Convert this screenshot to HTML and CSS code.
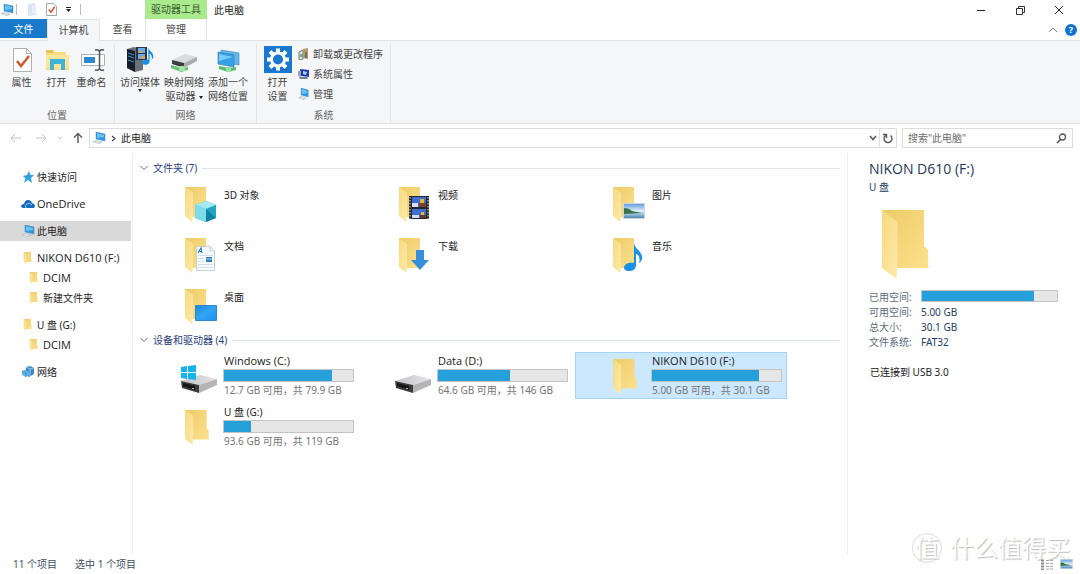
FILE: index.html
```html
<!DOCTYPE html>
<html lang="zh-CN">
<head>
<meta charset="utf-8">
<title>此电脑</title>
<link rel="stylesheet" href="styles.css">
</head>
<body>
<svg class="defs" width="0" height="0" aria-hidden="true">
  <defs>
    <linearGradient id="g-flap" x1="0" y1="0" x2="1" y2="1"><stop offset="0" stop-color="#f8da7c"/><stop offset="1" stop-color="#fdeaaa"/></linearGradient>
    <linearGradient id="g-back" x1="0" y1="0" x2="1" y2="1"><stop offset="0" stop-color="#edcb68"/><stop offset="1" stop-color="#fce08c"/></linearGradient>
    <linearGradient id="g-screen" x1="0" y1="0" x2="1" y2="1"><stop offset="0" stop-color="#1c86e0"/><stop offset=".5" stop-color="#35a4f6"/><stop offset="1" stop-color="#1b8ff0"/></linearGradient>
    <linearGradient id="g-disk" x1="0" y1="0" x2="1" y2="0"><stop offset="0" stop-color="#c4c4c6"/><stop offset="1" stop-color="#e4e4e6"/></linearGradient>
    <linearGradient id="g-sky" x1="0" y1="0" x2="0" y2="1"><stop offset="0" stop-color="#5f9fe0"/><stop offset=".5" stop-color="#e4f0fa"/><stop offset="1" stop-color="#4d86b8"/></linearGradient>
  </defs>
  <symbol id="folder" viewBox="0 0 50 69">
    <path d="M0 0H42V36L46 40V58H14L0 50Z" fill="url(#g-back)"/>
    <path d="M0 0 15.500 12V49L14.500 69 0 58Z" fill="url(#g-flap)"/>
    <path d="M46 57l3-1-3 2z" fill="#d8d3c8"/>
  </symbol>
  <symbol id="folder-item" viewBox="0 0 36 44">
    <path d="M4 2H25V32H12L4 28Z" fill="url(#g-back)"/>
    <path d="M4 2 12 8V32L11 37 4 31Z" fill="url(#g-flap)"/>
  </symbol>
  <symbol id="pc" viewBox="0 0 14 12">
    <path d="M4 0 13 2V9L4 7Z" fill="#2e9be3"/><path d="M5 1 12 3V5L5 6Z" fill="#68c2f5"/>
    <path d="M4 0 13 2V9L4 7Z" fill="none" stroke="#3c7299" stroke-width=".4"/>
    <path d="M0 10 4 8 11 10 7 12Z" fill="#b7c6cf"/><path d="M2 10 5 9 9 10 6 11Z" fill="#dfe8ee"/>
  </symbol>
  <symbol id="disk" viewBox="0 0 36 18">
    <path d="M0 6 19 0 36 4 18 10Z" fill="url(#g-disk)"/>
    <path d="M0 6 18 10V18L1 13Z" fill="#3b3b3d"/><path d="M18 10 36 4V10L18 18Z" fill="#b4b4b7"/>
    <path d="M2 8 14 11V15L2 11Z" fill="#171718"/><path d="M11 13h2v1h-2z" fill="#9bcf8f"/>
  </symbol>
  <symbol id="photo" viewBox="0 0 22 16">
    <path d="M0 0H22V16H0Z" fill="#fff"/><path d="M0.500.5H21.500V15.500H.5Z" fill="none" stroke="#ccd6df"/>
    <path d="M1 1H21V15H1Z" fill="url(#g-sky)"/><path d="M1 5Q6 5 9 8L19 10 1 11Z" fill="#37764c"/>
  </symbol>
  <symbol id="note" viewBox="0 0 19 28">
    <path d="M10 0C11 7 19 8 18 16Q17 19 15 20C17 13 13 11 12 11V22C12 27 8 28 5 28 1 28 0 26 0 24 1 20 6 19 10 20Z" fill="#1891e6"/>
  </symbol>
</svg>

<div class="window">
  <header class="titlebar">
    <div class="quick">
      <svg class="i14" viewBox="0 0 14 12"><use href="#pc"/></svg>
      <span class="bar"></span>
      <button aria-label="新建文件夹"><svg width="9" height="13" viewBox="0 0 9 13"><path d="M0 1 7 0V11H9V12L0 13Z" fill="#d9e5f3"/><path d="M4 2h4v9H4z" fill="#e8eef7"/></svg></button>
      <button aria-label="属性"><svg width="11" height="13" viewBox="0 0 24 28"><path d="M1 1H17L23 7V27H1Z" fill="#fff" stroke="#9b9b9b" stroke-width="2"/><path d="M6 14 11 20 19 8" fill="none" stroke="#d35a32" stroke-width="3.500"/></svg></button>
      <button aria-label="自定义"><svg width="5" height="5" viewBox="0 0 5 5"><path d="M0 0H5V1H0ZM0 2H5L2.500 5Z" fill="#222"/></svg></button>
      <span class="bar"></span>
    </div>
    <div class="context">驱动器工具</div>
    <h1 class="title">此电脑</h1>
    <div class="controls">
      <button aria-label="最小化"><svg width="10" height="10" viewBox="0 0 10 10"><path d="M1 5.500H9" stroke="#222"/></svg></button>
      <button aria-label="还原"><svg width="10" height="10" viewBox="0 0 10 10"><path d="M1.500 3.500H7.500V9.500H1.500ZM3.500 3.500V1.500H9.500V7.500H7.500" fill="none" stroke="#333"/></svg></button>
      <button aria-label="关闭"><svg width="10" height="10" viewBox="0 0 10 10"><path d="M1 1 9 9M9 1 1 9" stroke="#222"/></svg></button>
    </div>
  </header>

  <nav class="tabs">
    <button class="tab file">文件</button>
    <button class="tab active">计算机</button>
    <button class="tab view">查看</button>
    <button class="tab manage">管理</button>
    <div class="help">
      <button aria-label="折叠功能区"><svg width="10" height="6" viewBox="0 0 10 6"><path d="M1 5 5 1 9 5" fill="none" stroke="#7b8591"/></svg></button>
      <button class="q" aria-label="帮助">?</button>
    </div>
  </nav>

  <section class="ribbon">
    <div class="group place">
      <div class="tools">
        <button class="tool"><svg viewBox="0 0 28 28"><path d="M5.500 2.500H18.500L23.500 7.500V25.500H5.500Z" fill="#fdfdfd" stroke="#b0b0b0"/><path d="M18.500 2.500V7.500H23.500" fill="none" stroke="#b0b0b0"/><path d="M9 15 13 20 21 10" fill="none" stroke="#d2562f" stroke-width="2.500"/></svg>属性</button>
        <button class="tool"><svg viewBox="0 0 28 28"><path d="M3 4H10L12 6H23V9H26V24H3Z" fill="#f7dc85"/><path d="M3 4H10V7H3Z" fill="#e9c350"/><path d="M3 9H26V22H3Z" fill="#fbe59b"/><path d="M7 24V13H22V24H18V18H11V24Z" fill="#3fb4d8"/></svg>打开</button>
        <button class="tool"><svg viewBox="0 0 28 28"><path d="M3.500 8.500H26.500V19.500H3.500Z" fill="#fff" stroke="#a8b0b8"/><path d="M6 11H17V17H6Z" fill="#2f86d2"/><path d="M17 4Q21 3 21.500 6 22 3 26 4M21.500 6V22M17 24Q21 25 21.500 22 22 25 26 24" fill="none" stroke="#555" stroke-width="1.500"/></svg>重命名</button>
      </div>
      <h2>位置</h2>
    </div>
    <div class="group net">
      <div class="tools">
        <button class="tool wide"><svg viewBox="0 0 28 28"><path d="M1 3 8 1 17 3V24L9 26 1 22Z" fill="#6b7178"/><path d="M1 3 9 5V26L1 22Z" fill="#17202a"/><path d="M2 7 8 9M2 10 8 12M2 14 8 16" stroke="#3d91cf"/><path d="M10 1H21V14H10Z" fill="#273352"/><path d="M12 2H19V7H12ZM12 8H19V13H12Z" fill="#6caae8"/><path d="M12 5H16V7H12ZM15 10H19V13H15Z" fill="#d8a54e"/><use href="#note" x="16" y="1" width="12" height="18"/></svg>访问媒体<i class="caret low"></i></button>
        <button class="tool wide"><svg viewBox="0 0 28 28"><path d="M2 14 15 8 27 11 14 17Z" fill="#dadbdd"/><path d="M2 14 14 17V22L2 18Z" fill="#3d3e40"/><path d="M14 17 27 11V15L14 22Z" fill="#a9abad"/><path d="M1 19 12 22 18 21V24L11 26 1 22Z" fill="#65c673"/><path d="M9 20H15V25H9Z" fill="#a5dfaa"/></svg>映射网络<span>驱动器<i class="caret"></i></span></button>
        <button class="tool wide"><svg viewBox="0 0 28 28"><path d="M7 4 25 7V19L7 16Z" fill="#62b8ea" stroke="#3e80ac" stroke-width=".6"/><path d="M4 6 20 9V21L4 18Z" fill="#35a1e6" stroke="#3272a0" stroke-width=".6"/><path d="M5 8 19 11 5 15Z" fill="#79ccf7"/><path d="M5 20 15 22 22 21V24L14 26 5 23Z" fill="#54bd70"/><path d="M12 21H17V26H12Z" fill="#9ddca5"/></svg>添加一个<span>网络位置</span></button>
      </div>
      <h2>网络</h2>
    </div>
    <div class="group sys">
      <div class="tools">
        <button class="tool"><svg viewBox="0 0 28 28"><path d="M0 0H28V27H0Z" fill="#1878cf"/><g transform="translate(14 13.500)"><g stroke="#fff" stroke-width="4"><path d="M0-11V11M-11 0H11M-8-8 8 8M8-8-8 8"/></g><circle r="8" fill="#fff"/><circle r="5" fill="#1878cf"/></g></svg>打开<span>设置</span></button>
        <div class="small">
          <button><svg width="11" height="12" viewBox="0 0 11 12"><path d="M1 4 5 2V11L1 12Z" fill="#e4e7e5" stroke="#6d7772"/><path d="M5 1 10 0V11L5 10Z" fill="#b99b6b"/><path d="M7 4H9V10H7Z" fill="#6a6f68"/><path d="M2 6H5V9H2Z" fill="#79a38d"/></svg>卸载或更改程序</button>
          <button><svg width="11" height="12" viewBox="0 0 11 12"><path d="M2 1 11 2V9L3 8Z" fill="#1d3da6"/><path d="M5 3 9 4 8 7 5 6Z" fill="#a6c8f3"/><path d="M0 3 3 3V9L0 8Z" fill="#9da3af"/><path d="M1 9 9 9 10 11 2 11Z" fill="#777f8c"/></svg>系统属性</button>
          <button><svg width="11" height="12" viewBox="0 0 14 12" preserveAspectRatio="none"><use href="#pc"/></svg>管理</button>
        </div>
      </div>
      <h2>系统</h2>
    </div>
  </section>

  <div class="address">
    <div class="arrows">
      <button aria-label="后退"><svg width="12" height="10" viewBox="0 0 12 10"><path d="M11 5H1M5 1 1 5 5 9" fill="none" stroke="#c4c4c4"/></svg></button>
      <button aria-label="前进"><svg width="12" height="10" viewBox="0 0 12 10"><path d="M1 5H11M7 1 11 5 7 9" fill="none" stroke="#c4c4c4"/></svg></button>
      <button aria-label="最近位置"><svg width="6" height="10" viewBox="0 0 6 10"><path d="M1 4 3 6 5 4" fill="none" stroke="#c4c4c4"/></svg></button>
      <button aria-label="上移"><svg width="10" height="12" viewBox="0 0 10 12"><path d="M5 11V1M1 5.500 5 1.500 9 5.500" fill="none" stroke="#5f5f5f" stroke-width="1.500"/></svg></button>
    </div>
    <div class="path">
      <svg class="i14" viewBox="0 0 14 12"><use href="#pc"/></svg>
      <svg width="5" height="7" viewBox="0 0 5 7"><path d="M1 1 4 3.500 1 6" fill="none" stroke="#444" stroke-width="1.200"/></svg>
      <span class="here">此电脑</span>
      <button class="down" aria-label="历史"><svg width="8" height="6" viewBox="0 0 8 6"><path d="M1 1 4 4.500 7 1" fill="none" stroke="#555" stroke-width="1.500"/></svg></button>
      <button class="refresh" aria-label="刷新"><svg width="10" height="11" viewBox="0 0 10 11"><path d="M7.500 2.500A4 4 0 1 1 2.500 2.500M0 1.500H3.500V5" fill="none" stroke="#555" stroke-width="1.400"/></svg></button>
    </div>
    <label class="search">
      <input type="search" aria-label="搜索" placeholder="搜索&quot;此电脑&quot;">
      <svg width="11" height="11" viewBox="0 0 11 11"><circle cx="6.500" cy="4" r="3" fill="none" stroke="#555" stroke-width="1.300"/><path d="M4.500 6.500 1 10" stroke="#555" stroke-width="1.600"/></svg>
    </label>
  </div>

  <div class="body">
    <nav class="tree">
      <a href="#"><svg class="i14" viewBox="0 0 14 12"><path d="M8 0 9.500 4H13L10 7 11 12 7 9 3 12 4.500 7.500 2 5 6 4Z" fill="#329fe0"/></svg>快速访问</a>
      <a href="#" class="latin top"><svg class="i14" viewBox="0 0 14 12"><path d="M0 9Q0 6 3 6 4 2 7 2 10 2 11 5 14 6 14 8 14 10 12 10H2Z" fill="#1469c0"/><path d="M5 10Q3 7 6 6 8 4 11 7" fill="none" stroke="#cfe4f7" stroke-width=".8"/></svg>OneDrive</a>
      <a href="#" class="top on"><svg class="i14" viewBox="0 0 14 12"><use href="#pc"/></svg>此电脑</a>
      <a href="#" class="latin top"><svg class="i14" viewBox="0 0 50 69"><use href="#folder"/></svg>NIKON D610 (F:)</a>
      <a href="#" class="latin sub"><svg class="i14" viewBox="0 0 50 69"><use href="#folder"/></svg>DCIM</a>
      <a href="#" class="sub"><svg class="i14" viewBox="0 0 50 69"><use href="#folder"/></svg>新建文件夹</a>
      <a href="#" class="top"><svg class="i14" viewBox="0 0 50 69"><use href="#folder"/></svg>U 盘 (G:)</a>
      <a href="#" class="latin sub"><svg class="i14" viewBox="0 0 50 69"><use href="#folder"/></svg>DCIM</a>
      <a href="#" class="top"><svg class="i14" viewBox="0 0 14 12"><path d="M5 1 9 0 13 2V8L8 11 4 8Z" fill="#3c8ac8"/><path d="M5 1 9 3 13 2M9 3V10" stroke="#93cbee" fill="none"/><path d="M1 5 4 4 8 6V9L5 11 1 9Z" fill="#5fb5ea"/><path d="M1 5 5 7V11" fill="none" stroke="#286ba5" stroke-width=".6"/></svg>网络</a>
    </nav>

    <main class="content">
      <h2 class="section"><svg width="8" height="6" viewBox="0 0 8 6"><path d="M0.500 1 4 4.500 7.500 1" fill="none" stroke="#66707e"/></svg>文件夹 (7)</h2>
      <div class="grid folders">
        <button class="item"><svg class="pic" viewBox="0 0 36 44"><use href="#folder-item"/><path d="M14 20 25 16 35 20V33L25 37 14 33Z" fill="#35bfd6"/><path d="M14 20 25 16 35 20 25 24Z" fill="#a4eaf2"/><path d="M14 20 25 24V37L14 33Z" fill="#7cdce9"/><path d="M25 24 35 20V33Z" fill="#24a4c3"/><path d="M25 24 35 33 25 37Z" fill="#1181a6"/></svg><span class="info"><span class="name">3D 对象</span></span></button>
        <button class="item"><svg class="pic" viewBox="0 0 36 44"><use href="#folder-item"/><path d="M14 11H34V34H14Z" fill="#25262c"/><path d="M15 12V34M33 12V34" stroke="#e8e8e8" stroke-dasharray="1.500 1.500"/><path d="M17 12H31V22H17ZM17 24H31V33H17Z" fill="#3d6fd3"/><path d="M17 18H23V22H17ZM17 30H24V33H17Z" fill="#d7dfee"/><path d="M25 14H29V18H25ZM26 27H29V31H26Z" fill="#e5b92e"/><path d="M24 18H31V22H24Z" fill="#7c4033"/><path d="M25 30H31V33H25Z" fill="#65382d"/></svg><span class="info"><span class="name">视频</span></span></button>
        <button class="item"><svg class="pic" viewBox="0 0 36 44"><use href="#folder-item"/><use href="#photo" x="14" y="18" width="22" height="16"/></svg><span class="info"><span class="name">图片</span></span></button>
        <button class="item"><svg class="pic" viewBox="0 0 36 44"><use href="#folder-item"/><path d="M15.500 10.500H29L33.500 15V34.500H15.500Z" fill="#f7fafc" stroke="#c8d0d6"/><path d="M29 10.500V15H33.500" fill="none" stroke="#c8d0d6"/><path d="M17 17 20 12 21 17M18 15.500H21" fill="none" stroke="#2a86b8" stroke-width="1.200"/><path d="M17 19.500H32M17 22.500H23M17 25.500H23M17 28.500H32M17 31.500H32" stroke="#cfe0ec"/><path d="M25 21H31V26H25Z" fill="#2d7db6"/><path d="M25 23H31" stroke="#b8dbef"/></svg><span class="info"><span class="name">文档</span></span></button>
        <button class="item"><svg class="pic" viewBox="0 0 36 44"><use href="#folder-item"/><path d="M21 14H29V24H34L25 34 16 24H21Z" fill="#358fdb"/></svg><span class="info"><span class="name">下载</span></span></button>
        <button class="item"><svg class="pic" viewBox="0 0 36 44"><use href="#folder-item"/><use href="#note" x="15" y="7" width="19" height="28"/></svg><span class="info"><span class="name">音乐</span></span></button>
        <button class="item"><svg class="pic" viewBox="0 0 36 44"><use href="#folder-item"/><path d="M14.500 18.500H35.500V33.500H14.500Z" fill="url(#g-screen)" stroke="#2f86cc"/></svg><span class="info"><span class="name">桌面</span></span></button>
      </div>

      <h2 class="section"><svg width="8" height="6" viewBox="0 0 8 6"><path d="M0.500 1 4 4.500 7.500 1" fill="none" stroke="#66707e"/></svg>设备和驱动器 (4)</h2>
      <div class="grid drives">
        <button class="item"><svg class="pic" viewBox="0 0 36 44"><use href="#disk" x="0" y="22" width="36" height="18"/><path d="M0 14 6 13V19H0ZM7 13 15 12V19H7ZM0 20H6V26L0 25ZM7 20H15V27L7 26Z" fill="#14b4f0"/></svg><span class="info"><span class="name latin">Windows (C:)</span><span class="meter"><span style="width:84%"></span></span><span class="free">12.7 GB 可用，共 79.9 GB</span></span></button>
        <button class="item"><svg class="pic" viewBox="0 0 36 44"><use href="#disk" x="0" y="22" width="36" height="18"/></svg><span class="info"><span class="name latin">Data (D:)</span><span class="meter"><span style="width:56%"></span></span><span class="free">64.6 GB 可用，共 146 GB</span></span></button>
        <button class="item selected"><svg class="pic" viewBox="0 0 36 44"><use href="#folder" x="4" y="6" width="26" height="35"/></svg><span class="info"><span class="name latin">NIKON D610 (F:)</span><span class="meter"><span style="width:83%"></span></span><span class="free">5.00 GB 可用，共 30.1 GB</span></span></button>
        <button class="item"><svg class="pic" viewBox="0 0 36 44"><use href="#folder" x="4" y="6" width="26" height="35"/></svg><span class="info"><span class="name">U 盘 (G:)</span><span class="meter"><span style="width:21%"></span></span><span class="free">93.6 GB 可用，共 119 GB</span></span></button>
      </div>
    </main>

    <aside class="details">
      <h2>NIKON D610 (F:)</h2>
      <p class="kind">U 盘</p>
      <svg class="big" viewBox="0 0 50 69"><use href="#folder"/></svg>
      <dl>
        <dt>已用空间:</dt><dd><span class="meter"><span style="width:83%"></span></span></dd>
        <dt>可用空间:</dt><dd>5.00 GB</dd>
        <dt>总大小:</dt><dd>30.1 GB</dd>
        <dt>文件系统:</dt><dd>FAT32</dd>
      </dl>
      <p class="usb">已连接到 USB 3.0</p>
    </aside>
  </div>

  <footer class="status">
    <span>11 个项目</span>
    <span>选中 1 个项目</span>
    <div class="views">
      <button aria-label="详细信息"><svg width="12" height="11" viewBox="0 0 12 11"><path d="M0 1.500H3M0 4.500H3M0 7.500H3M0 10.500H3" stroke="#888" stroke-width="2"/><path d="M5 1.500H8M9 1.500H12M5 4.500H8M9 4.500H12M5 7.500H8M9 7.500H12M5 10H8M9 10H12" stroke="#aaa"/></svg></button>
      <button aria-label="大图标"><svg width="13" height="10" viewBox="0 0 22 16" preserveAspectRatio="none"><use href="#photo"/></svg></button>
    </div>
  </footer>

  <div class="watermark"><span class="seal">值</span><span>什么值得买</span></div>
</div>
</body>
</html>
```

FILE: styles.css
```css
* { box-sizing: border-box; }
body { margin: 0; background: #fefefe; }
body, button, input { font-family: "Noto Sans", "Noto Sans CJK SC", sans-serif; font-size: 10px; line-height: 14px; color: #222; }
button { border: 0; padding: 0; margin: 0; background: none; }
h1, h2, p, dl, dd { margin: 0; font-weight: 400; font-size: 10px; }
svg { display: block; flex: none; }
a { color: inherit; text-decoration: none; }
.defs { position: absolute; }
.i14 { width: 14px; height: 12px; }
.latin { font-family: "Open Sans", sans-serif; font-size: 11px; }
.window { position: relative; min-height: 100vh; display: flex; flex-direction: column; }

.titlebar { display: flex; height: 19px; align-items: center; }
.quick { display: flex; align-items: center; width: 145px; gap: 9px; }
.quick .bar { width: 1px; height: 11px; background: #bbb; }
.quick .bar:first-of-type { margin: 0 2px 0 -7px; }
.context { width: 62px; height: 19px; line-height: 18px; text-align: center; background: #a9eb8c; color: #3c5a30; }
.title { padding-left: 7px; }
.controls { display: flex; gap: 29px; margin-left: auto; padding-right: 16px; }

.tabs { display: flex; height: 22px; }
.tab { height: 22px; padding-bottom: 2px; color: #444; }
.tab.file { width: 47px; height: 19px; padding: 0; background: #1979ca; color: #fff; }
.tab.active { position: relative; z-index: 1; width: 53px; background: #f5f6f7; border: 1px solid #e3e4e5; border-bottom: 0; }
.tab.view { width: 45px; }
.tab.manage { width: 62px; border: solid #e3e4e5; border-width: 0 1px; }
.help { display: flex; align-items: center; gap: 7px; margin-left: auto; padding-right: 3px; }
.q { width: 12px; height: 12px; border-radius: 50%; background: #1173cc; color: #fff; font-size: 9px; line-height: 12px; font-weight: 700; }

.ribbon { display: flex; height: 84px; margin-top: -1px; padding-top: 3px; background: #f5f6f7; border: solid #e0e1e3; border-width: 1px 0; }
.group { display: flex; flex-direction: column; border-right: 1px solid #e4e5e7; color: #444; }
.group h2 { margin-top: auto; padding-bottom: 1px; text-align: center; color: #666; }
.tools { display: flex; padding-top: 2px; }
.place { width: 115px; padding: 0 4px; }
.net { width: 142px; padding: 0 3px; }
.sys { width: 134px; padding: 0 3px; }
.tool { width: 35px; display: flex; flex-direction: column; align-items: center; color: #444; white-space: nowrap; }
.tool.wide { width: 44px; }
.tool svg { width: 28px; height: 28px; margin-bottom: 1px; }
.caret { display: inline-block; margin-left: 3px; border: 2px solid transparent; border-top: 3px solid #222; border-bottom: 0; vertical-align: middle; }
.caret.low { margin: 0; }
.small { display: flex; flex-direction: column; gap: 6px; padding: 1px 0 0 3px; }
.small button { display: flex; align-items: center; gap: 4px; color: #444; }

.address { display: flex; height: 29px; padding: 4px 7px 5px 10px; gap: 5px; }
.arrows { display: flex; align-items: center; width: 74px; gap: 13px; }
.arrows button:nth-child(n+3) { margin-left: -3px; }
.path { flex: 1; display: flex; align-items: center; border: 1px solid #dcdcdc; padding-left: 2px; gap: 5px; background: #fff; }
.path .down { margin: 0 -3px 0 auto; }
.refresh { height: 18px; padding: 0 3px; border-left: 1px solid #e2e2e2; }
.search { width: 171px; display: flex; align-items: center; border: 1px solid #dcdcdc; padding: 0 5px; }
.search input { flex: 1; min-width: 0; border: 0; padding: 0; outline: 0; background: none; }
.search input::placeholder { color: #6d6d6d; opacity: 1; }

.body { flex: 1; display: flex; }
.tree { width: 133px; padding-top: 14px; border-right: 1px solid #f1f1f1; }
.tree a { display: flex; align-items: center; height: 20px; gap: 2px; padding-left: 21px; white-space: nowrap; }
.tree a.top { margin-top: 7px; }
.tree a.sub { padding-left: 27px; }
.tree a.on { background: #d9d9d9; margin-right: 1px; }
.content { flex: 1; padding: 5px 7px 0 14px; }
.section { display: flex; align-items: center; height: 20px; gap: 5px; margin-left: -7px; color: #2b3f7c; }
.section::after { content: ""; flex: 1; height: 1px; background: #e2e6ea; }
.grid { display: grid; grid-template-columns: repeat(auto-fill, 212px); column-gap: 2px; }
.folders { padding-top: 6px; grid-auto-rows: 44px; row-gap: 7px; }
.drives { padding-top: 2px; row-gap: 4px; }
.item { display: flex; align-items: flex-start; gap: 6px; padding: 0 4px 0 33px; border: 1px solid transparent; text-align: left; }
.folders .item { height: 44px; }
.selected { background: #cce8ff; border-color: #a6d3f5; }
.pic { width: 36px; height: 44px; }
.info { flex: 1; display: flex; flex-direction: column; gap: 1px; padding: 1px 0; }
.folders .info { padding-top: 3px; }
.name, .free { padding-left: 1px; }
.free { color: #757575; white-space: nowrap; }
.meter { display: block; height: 13px; border: 1px solid #c4c4c4; background: #e6e6e6; }
.meter span { display: block; height: 11px; background: #26a0da; }

.details { width: 233px; padding: 7px 22px 0 21px; border-left: 1px solid #eee; color: #24405f; }
.details h2 { font-family: "Open Sans", sans-serif; font-size: 14px; line-height: 18px; color: #1e395b; }
.kind { padding-top: 2px; }
.big { width: 50px; height: 69px; margin: 16px 0 11px 13px; }
.details dl { display: grid; grid-template-columns: 52px 1fr; line-height: 15px; }
.details dt { color: #5d6b7d; }
.details dd .meter { height: 12px; }
.details dd .meter span { height: 10px; }
.usb { padding: 15px 0 0 1px; color: #222; }

.status { display: flex; align-items: center; height: 20px; padding: 0 7px 0 13px; gap: 18px; color: #40505f; }
.views { display: flex; align-items: center; gap: 7px; margin-left: auto; }
.watermark { position: absolute; right: 10px; bottom: 11px; display: flex; align-items: center; gap: 8px; font-size: 24px; line-height: 30px; color: #fff; text-shadow: 1px 1px 1px #bbb; pointer-events: none; }
.seal { width: 30px; height: 30px; border: 1px solid #ddd; border-radius: 50%; line-height: 28px; text-align: center; }
```
